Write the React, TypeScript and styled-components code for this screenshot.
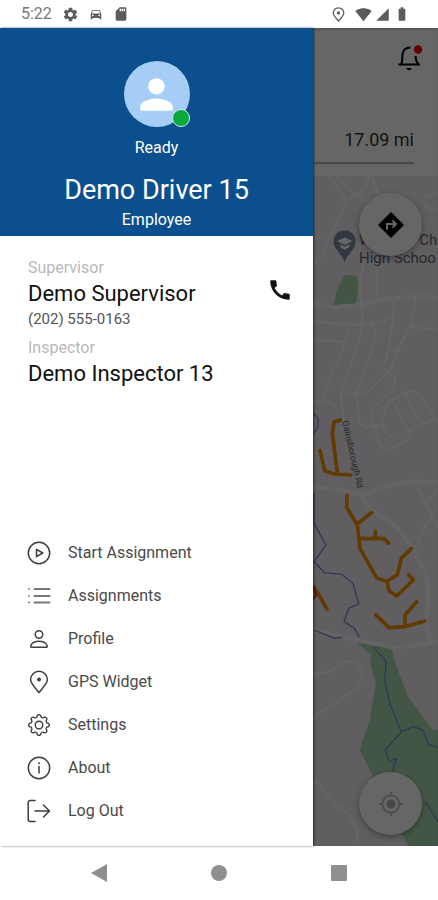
import React from "react";
import styled, { createGlobalStyle } from "styled-components";
import {
  MdBatteryFull,
  MdCall,
  MdDirectionsCar,
  MdPerson,
  MdSdCard,
  MdSettings,
  MdSignalCellular4Bar,
  MdSignalWifi4Bar,
} from "react-icons/md";
import { BsGear, BsPerson } from "react-icons/bs";

const GlobalStyle = createGlobalStyle`
  * { box-sizing: border-box; }
  body {
    margin: 0;
    background: #fff;
    font-family: Roboto, "Liberation Sans", sans-serif;
    color: #1a1a1a;
  }
  button { border: 0; padding: 0; background: none; font: inherit; color: inherit; cursor: pointer; }
  a { color: inherit; text-decoration: none; }
  p, h1, ul, dl, dd { margin: 0; padding: 0; }
  svg { display: block; }
`;

const Phone = styled.div`
  display: flex;
  flex-direction: column;
  min-height: 100vh;
`;

const StatusBar = styled.header`
  display: flex;
  align-items: center;
  justify-content: space-between;
  height: 28px;
  padding: 0 28px 0 21px;
  color: #5c5c5c;
`;

const StatusGroup = styled.div<{ $gap: number }>`
  display: flex;
  align-items: center;
  gap: ${(p) => p.$gap}px;
`;

const Clock = styled.time`
  font-size: 16px;
  line-height: 20px;
  color: #777;
`;

const Screen = styled.div`
  position: relative;
  flex: 1;
  display: grid;
`;

const Page = styled.main`
  grid-area: 1 / 1;
  display: flex;
  flex-direction: column;
  min-width: 0;
`;

const TripHeader = styled.section`
  display: flex;
  flex-direction: column;
  align-items: flex-end;
  justify-content: space-between;
  height: 148px;
  padding: 16px 16px 12px;
  background: #fff;
`;

const TripRow = styled.div`
  align-self: stretch;
  margin-right: 8px;
  padding-bottom: 10px;
  border-bottom: 2px solid #b4b4b4;
  text-align: right;
  font-size: 18px;
  line-height: 24px;
  color: #333;
`;

const MapArea = styled.section`
  position: relative;
  flex: 1;
  overflow: hidden;
  background: #f0eaf0;
`;

const MapDrawing = styled.svg`
  position: absolute;
  inset: 0;
  width: 100%;
  height: 100%;
`;

const MapControls = styled.div`
  position: absolute;
  inset: 17px 16px 11px auto;
  display: flex;
  flex-direction: column;
  justify-content: space-between;
`;

const RoundButton = styled.button`
  display: grid;
  place-items: center;
  width: 63px;
  height: 63px;
  border-radius: 50%;
  background: #fff;
  color: #000;
  box-shadow: 0 2px 6px rgba(0, 0, 0, 0.35);
`;

const Scrim = styled.div`
  position: absolute;
  inset: 0;
  background: rgba(0, 0, 0, 0.6);
  box-shadow: inset 0 2px 2px rgba(0, 0, 0, 0.15);
`;

const Drawer = styled.aside`
  position: relative;
  grid-area: 1 / 1;
  display: flex;
  flex-direction: column;
  width: min(313px, calc(100% - 56px));
  background: #fff;
  box-shadow: 1px 0 2px rgba(0, 0, 0, 0.6);
`;

const DriverCard = styled.section`
  display: flex;
  flex-direction: column;
  align-items: center;
  height: 208px;
  padding-top: 33px;
  background: #0b4f8e;
  color: #fff;
`;

const Avatar = styled.div`
  position: relative;
  display: grid;
  place-items: center;
  width: 66px;
  height: 66px;
  border-radius: 50%;
  background: #a5cdf6;
`;

const OnlineDot = styled.span`
  position: absolute;
  right: 0;
  bottom: 0;
  width: 18px;
  height: 18px;
  border: 1px solid #d5e8f5;
  border-radius: 50%;
  background: #04ab3c;
`;

const DriverMeta = styled.p`
  font-size: 16px;
  line-height: 20px;
`;

const Status = styled(DriverMeta)`
  margin-top: 11px;
`;

const DriverName = styled.h1`
  margin-top: 14px;
  font-size: 27px;
  font-weight: 400;
  line-height: 36px;
`;

const Employment = styled(DriverMeta)`
  margin-top: 2px;
`;

const Contacts = styled.dl`
  display: flex;
  flex-direction: column;
  gap: 12px;
  padding: 23px 20px 0 28px;
`;

const Contact = styled.div`
  display: grid;
  grid-template-columns: 1fr auto;
`;

const ContactRole = styled.dt`
  grid-column: 1 / -1;
  font-size: 16px;
  line-height: 18px;
  color: #b8b8b8;
`;

const ContactName = styled.dd`
  font-size: 22px;
  line-height: 34px;
  color: #111;
`;

const ContactPhone = styled.dd`
  grid-column: 1 / -1;
  font-size: 15px;
  line-height: 16px;
  color: #555;
`;

const CallButton = styled.button`
  align-self: start;
  width: 26px;
  height: 26px;
  color: #111;
`;

const Menu = styled.ul`
  margin-top: auto;
  padding: 24px 0 14px;
  list-style: none;
`;

const MenuLink = styled.a`
  display: flex;
  align-items: center;
  gap: 17px;
  height: 43px;
  padding: 0 27px;
  font-size: 16px;
  font-weight: 400;
  line-height: 20px;
  color: #4a4a4a;
`;

const MenuIcon = styled.span`
  display: grid;
  place-items: center;
  width: 24px;
  height: 24px;
  color: #3c3c42;
`;

const NavBar = styled.nav`
  display: flex;
  align-items: center;
  justify-content: center;
  gap: 96px;
  height: 54px;
  color: #8f8f8f;
`;

const NavButton = styled.button`
  display: grid;
  place-items: center;
  width: 24px;
  height: 24px;
`;

function LineIcon({ children }: { children: React.ReactNode }) {
  return (
    <svg width="24" height="24" viewBox="0 0 24 24" fill="none" stroke="currentColor" strokeWidth="1.5" strokeLinecap="round" strokeLinejoin="round" aria-hidden="true">
      {children}
    </svg>
  );
}

function PinIcon({ size }: { size: number }) {
  return (
    <svg width={size} height={size} viewBox="0 0 24 24" fill="none" stroke="currentColor" strokeWidth={size < 20 ? 2 : 1.5} strokeLinejoin="round" aria-hidden="true">
      <path d="M12 22.500C9 18.500 3.600 14 3.600 9.600a8.400 8.400 0 0 1 16.800 0C20.400 14 15 18.500 12 22.500Z" />
      <circle cx="12" cy="9.500" r={size < 20 ? 2.6 : 1.9} fill="currentColor" stroke="none" />
    </svg>
  );
}

const menu = [
  {
    label: "Start Assignment",
    icon: (
      <LineIcon>
        <circle cx="12" cy="12" r="10.700" />
        <path d="M9.500 8.300v7.400l6.300-3.700Z" />
      </LineIcon>
    ),
  },
  {
    label: "Assignments",
    icon: (
      <LineIcon>
        <path d="M7.500 5h15M7.500 12h15M7.500 18.500h15" strokeWidth="2" stroke="#77777b" />
        <path d="M1.500 5h1M1.500 12h1M1.500 18.500h1" stroke="#88888c" />
      </LineIcon>
    ),
  },
  { label: "Profile", icon: <BsPerson size={24} /> },
  { label: "GPS Widget", icon: <PinIcon size={24} /> },
  { label: "Settings", icon: <BsGear size={22} /> },
  {
    label: "About",
    icon: (
      <LineIcon>
        <circle cx="12" cy="12" r="10.700" />
        <path d="M12 10.500v6.500" />
        <circle cx="12" cy="7.300" r="1" fill="currentColor" stroke="none" />
      </LineIcon>
    ),
  },
  {
    label: "Log Out",
    icon: (
      <LineIcon>
        <path d="M8 1.500H3.200A2 2 0 0 0 1.200 3.500v17a2 2 0 0 0 2 2H8M8 12h14.500M16.500 6l6 6-6 6" />
      </LineIcon>
    ),
  },
];

function StreetMap() {
  return (
    <MapDrawing viewBox="-924 528 1314 2010" preserveAspectRatio="xMaxYMin slice" aria-hidden="true">
      <g fill="#a9d8b0">
        <path d="M110 825L145 828 152 850 145 910 78 916 86 870Z" />
        <path d="M145 1928L185 1935 250 1945 262 1990 300 2090 375 2190H400V2540H302L190 2320 155 2250 185 2160 203 2050 186 1990 190 1965Z" />
      </g>
      <g fill="none" stroke="#fff" strokeOpacity="0.8" strokeWidth="7" strokeLinejoin="round" strokeLinecap="round">
        <path strokeWidth="12" d="M10 908L75 922 160 915 200 903 300 890 390 892" />
        <path strokeWidth="12" d="M10 1462L100 1470 165 1485 250 1455 310 1444 390 1447M155 1480L190 1530 262 1575 310 1640 355 1720 362 1800 352 1860 366 1925" />
        <path strokeWidth="12" d="M10 1888L150 1920 260 1943 390 1927" />
        <path d="M62 528L115 600 95 650 60 720 40 770 10 800M88 528L130 580 240 625M120 600L170 570 185 528M390 580L355 590 350 620 390 630" />
        <path d="M200 720L170 780 155 850 165 970 145 1050 115 1130 98 1180 105 1240 110 1290M205 780V895M190 528L215 590" />
        <path d="M10 965L150 975 200 970 255 955M10 1020L105 1025M125 975L100 1060 60 1150 45 1200 85 1220" />
        <path d="M258 905L255 955 240 1050 228 1100 240 1120 262 1130 260 1160 200 1220 190 1250 215 1330 235 1352 275 1335 310 1305 305 1290 380 1255 345 1200 320 1172 290 1180 240 1210 220 1260 225 1285 260 1320" />
        <path d="M322 900L310 970 270 1050 245 1110 180 1175 145 1180 98 1180M145 1180L155 1270 175 1282 220 1275M145 1175L190 1060 205 1000 190 970M305 980L390 990M240 1045L275 1050M260 1215L300 1290M295 1185L330 1260M380 1255L395 1270" />
        <path d="M325 1455L390 1580M390 1470L355 1510M390 1520L345 1590 325 1640M10 1330L10 1200 45 1205" />
        <path d="M10 2022L70 2015 110 1982 145 1990 165 2020 150 2060 80 2110 10 2155M20 2340L80 2410 125 2445 148 2490V2540" />
      </g>
      <g fill="none" stroke="#7090d0" strokeWidth="4" strokeLinejoin="round">
        <path d="M16 1240L30 1255 30 1280 18 1300M18 1480L18 1570 54 1635 18 1685 50 1718 100 1723 135 1750 152 1812 122 1825 108 1865 140 1885 154 1912M18 1890L80 1915 102 1912" />
        <path d="M195 1940L235 1985 230 2040 245 2110 280 2195 315 2180 345 2190 362 2235 390 2242M280 2195L232 2250 245 2285 265 2275 255 2310 268 2330M352 2405L390 2465" />
      </g>
      <g fill="none" stroke="#f29200" strokeWidth="11" strokeLinejoin="round" strokeLinecap="round">
        <path d="M97 1260L78 1266 73 1300 88 1418M36 1352L50 1412 80 1422 128 1425" />
        <path d="M117 1485L116 1522 148 1575 156 1645 207 1735 237 1744 268 1724 280 1675 310 1645M148 1572L191 1537M154 1616H228L242 1630M202 1595V1615M237 1744L243 1772 266 1788 316 1740 302 1724" />
        <path d="M203 1844L243 1883 291 1880 350 1863M291 1880V1845L326 1805M18 1760L57 1827" />
      </g>
      <path d="M16 1760L24 1785 16 1797" fill="none" stroke="#e33" strokeWidth="7" />
      <path d="M110 790C106 762 77 752 77 724a33 33 0 0 1 66 0C143 752 114 762 110 790Z" fill="#7890a0" />
      <path d="M88 723L110 712 133 723 110 735ZM97 733V742L110 749 124 742V733L110 740Z" fill="#fff" />
      <g fill="#606771" fontFamily="Roboto, sans-serif">
        <text x="153" y="735" fontSize="45">W</text>
        <text x="334" y="735" fontSize="45">Ch</text>
        <text x="153" y="789" fontSize="45">High Schoo</text>
        <text transform="translate(102 1264) rotate(77)" fontSize="27">Gainsborough Rd</text>
      </g>
    </MapDrawing>
  );
}

export default function App() {
  return (
    <Phone>
      <GlobalStyle />
      <StatusBar>
        <StatusGroup $gap={10}>
          <Clock>5:22</Clock>
          <MdSettings size={17} />
          <MdDirectionsCar size={14} />
          <MdSdCard size={16} />
        </StatusGroup>
        <StatusGroup $gap={3}>
          <StatusGroup $gap={9}>
            <PinIcon size={15} />
            <MdSignalWifi4Bar size={17} />
          </StatusGroup>
          <StatusGroup $gap={4}>
            <MdSignalCellular4Bar size={15} />
            <MdBatteryFull size={16} />
          </StatusGroup>
        </StatusGroup>
      </StatusBar>

      <Screen>
        <Page>
          <TripHeader>
            <button aria-label="Notifications">
              <svg width="24" height="28" viewBox="0 0 24 28" fill="none" stroke="#000" strokeWidth="2" aria-hidden="true">
                <path d="M0.500 20.500H22M3 20.500C5 17 4 14 4.500 10.500 5 6 7.500 3.500 12.500 3.500M17.500 12C18 15.500 18 18 20.500 20.500" />
                <path d="M8 24H14Q11 28.500 8 24Z" fill="#000" stroke="none" />
                <circle cx="20" cy="5.500" r="4.200" fill="#f00" stroke="none" />
              </svg>
            </button>
            <TripRow>17.09 mi</TripRow>
          </TripHeader>
          <MapArea>
            <StreetMap />
            <MapControls>
              <RoundButton aria-label="Directions">
                <svg width="28" height="28" viewBox="0 0 28 28" aria-hidden="true">
                  <path d="M14 1.500L26.500 14 14 26.500 1.500 14Z" fill="#000" stroke="#000" strokeLinejoin="round" />
                  <path d="M10 18.500V13H18M15.500 9.500L19 13 15.500 16.500" fill="none" stroke="#fff" strokeWidth="2" />
                </svg>
              </RoundButton>
              <RoundButton aria-label="My location">
                <svg width="24" height="24" viewBox="0 0 24 24" fill="none" stroke="#c2c2c2" strokeWidth="2" aria-hidden="true">
                  <circle cx="12" cy="12" r="8.500" />
                  <circle cx="12" cy="12" r="4.500" fill="#b4b4b4" stroke="none" />
                  <path d="M12 0V4M12 20V24M0 12H4M20 12H24" />
                </svg>
              </RoundButton>
            </MapControls>
          </MapArea>
        </Page>
        <Scrim />
        <Drawer>
          <DriverCard>
            <Avatar>
              <MdPerson size={49} />
              <OnlineDot />
            </Avatar>
            <Status>Ready</Status>
            <DriverName>Demo Driver 15</DriverName>
            <Employment>Employee</Employment>
          </DriverCard>
          <Contacts>
            <Contact>
              <ContactRole>Supervisor</ContactRole>
              <ContactName>Demo Supervisor</ContactName>
              <CallButton aria-label="Call Demo Supervisor">
                <MdCall size={26} />
              </CallButton>
              <ContactPhone>(202) 555-0163</ContactPhone>
            </Contact>
            <Contact>
              <ContactRole>Inspector</ContactRole>
              <ContactName>Demo Inspector 13</ContactName>
            </Contact>
          </Contacts>
          <Menu>
            {menu.map((item) => (
              <li key={item.label}>
                <MenuLink href="#">
                  <MenuIcon>{item.icon}</MenuIcon>
                  {item.label}
                </MenuLink>
              </li>
            ))}
          </Menu>
        </Drawer>
      </Screen>

      <NavBar aria-label="System">
        <NavButton aria-label="Back">
          <svg width="18" height="18" viewBox="0 0 18 18" fill="currentColor"><path d="M1 9L17 0V18Z" /></svg>
        </NavButton>
        <NavButton aria-label="Home">
          <svg width="18" height="18" viewBox="0 0 18 18" fill="currentColor"><circle cx="9" cy="9" r="8" /></svg>
        </NavButton>
        <NavButton aria-label="Recent apps">
          <svg width="18" height="18" viewBox="0 0 18 18" fill="currentColor"><rect x="1" y="1" width="16" height="16" rx="1" /></svg>
        </NavButton>
      </NavBar>
    </Phone>
  );
}
